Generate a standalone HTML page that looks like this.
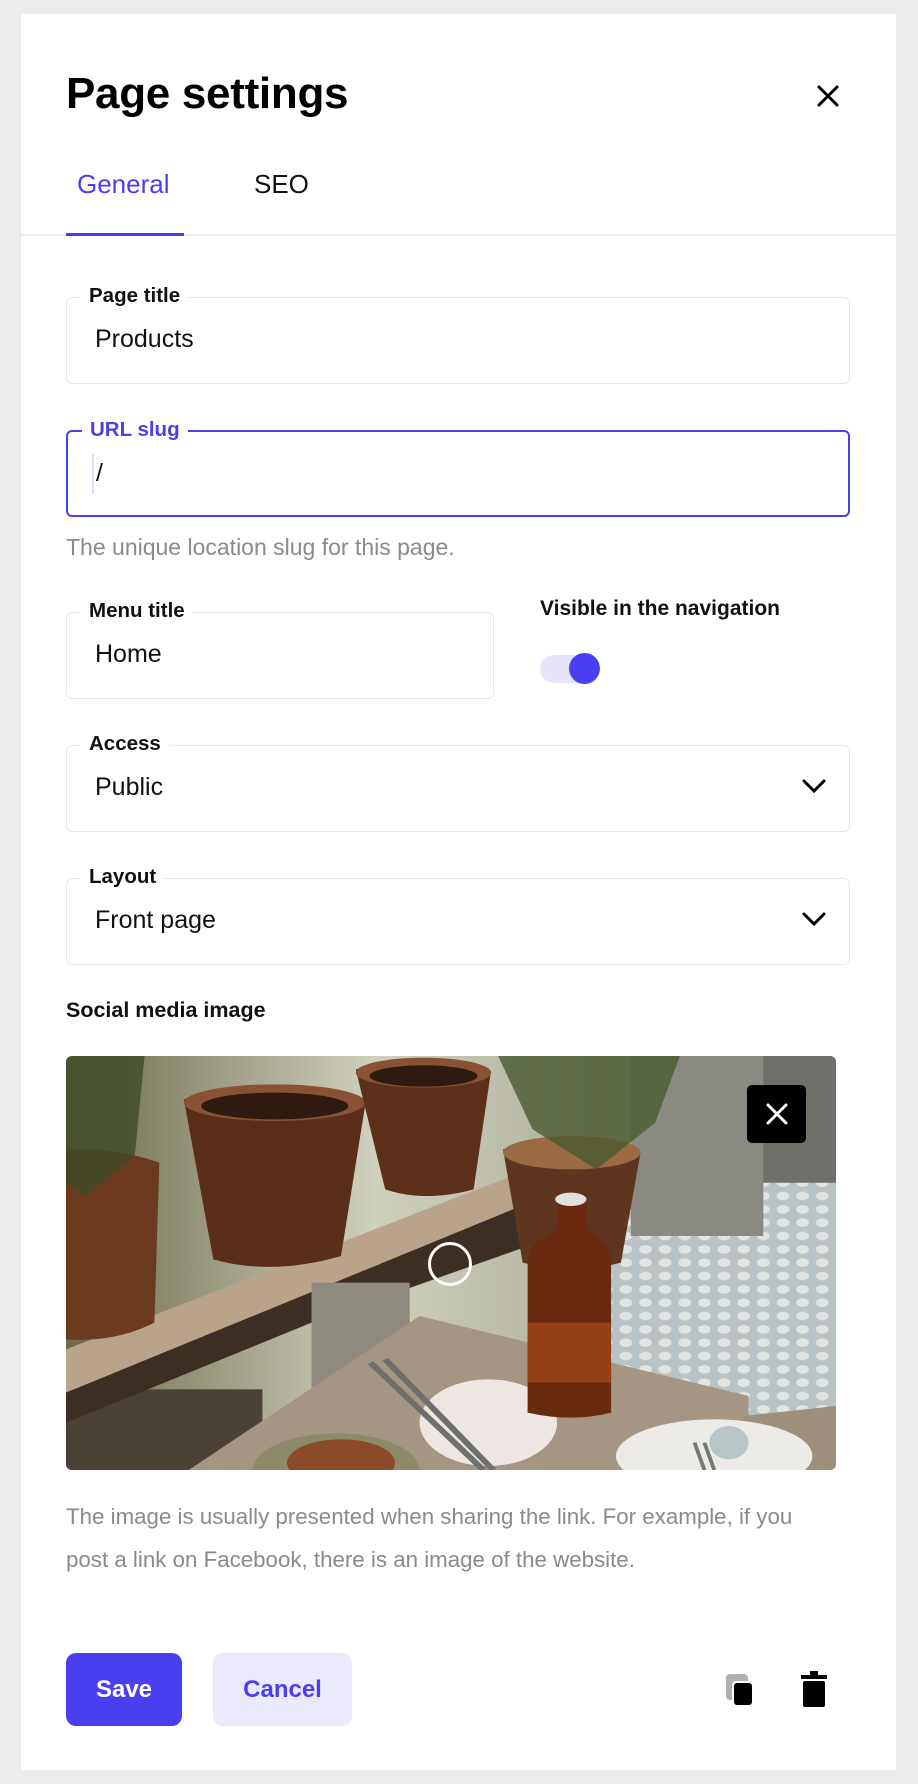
<!DOCTYPE html>
<html><head><meta charset="utf-8">
<style>
*{box-sizing:border-box;margin:0;padding:0}
body{width:918px;height:1784px;background:#ececec;font-family:"Liberation Sans",sans-serif;position:relative;overflow:hidden}
.card{position:absolute;left:21px;top:14px;width:875px;height:1756px;background:#fff}
.abs{position:absolute}
h1{position:absolute;left:66px;top:69px;font-size:44px;font-weight:700;color:#000;letter-spacing:-0.3px}
.tab{position:absolute;top:169px;font-size:26px}
.field{position:absolute;left:66px;width:784px;height:87px;border:1.5px solid #e8e8ea;border-radius:6px}
.lbl{position:absolute;left:14px;top:-14px;background:#fff;padding:0 8px;font-size:20.5px;font-weight:700;color:#111;line-height:24px}
.val{position:absolute;left:28px;top:27px;font-size:25px;color:#111}
.help{position:absolute;left:66px;font-size:22.3px;color:#8a8a8a;white-space:nowrap}
.chev{position:absolute;right:22px;top:32px}
</style></head><body>
<div class="card"></div>
<h1>Page settings</h1>
<svg class="abs" style="left:816px;top:84px" width="24" height="24" viewBox="0 0 24 24"><path d="M3 3L21 21M21 3L3 21" stroke="#000" stroke-width="3" stroke-linecap="round"/></svg>
<div class="tab" style="left:77px;color:#4a3ff0">General</div>
<div class="tab" style="left:254px;color:#111">SEO</div>
<div class="abs" style="left:21px;top:234px;width:875px;height:2px;background:#eeeef0"></div>
<div class="abs" style="left:66px;top:233px;width:118px;height:3px;background:#4a3ff0"></div>

<div class="field" style="top:297px"><div class="lbl">Page title</div><div class="val">Products</div></div>
<div class="field" style="top:430px;border:2px solid #4a3ff0"><div class="lbl" style="color:#4a3ff0">URL slug</div><div class="abs" style="left:24px;top:22px;width:2px;height:40px;background:#dcdcf5"></div><div class="val" style="top:27px">/</div></div>
<div class="help" style="top:534px;font-size:23px">The unique location slug for this page.</div>

<div class="field" style="top:612px;width:428px"><div class="lbl">Menu title</div><div class="val">Home</div></div>
<div class="abs" style="left:540px;top:597px;font-size:21px;font-weight:700;color:#111">Visible in the navigation</div>
<div class="abs" style="left:540px;top:655px;width:58px;height:28px;border-radius:14px;background:#e6e4fb"></div>
<div class="abs" style="left:569px;top:653px;width:31px;height:31px;border-radius:50%;background:#4a3ff0"></div>

<div class="field" style="top:745px"><div class="lbl">Access</div><div class="val">Public</div>
<svg class="chev" width="26" height="16" viewBox="0 0 26 16"><path d="M3 3L13 13L23 3" stroke="#000" stroke-width="3" fill="none" stroke-linecap="round"/></svg></div>
<div class="field" style="top:878px"><div class="lbl">Layout</div><div class="val">Front page</div>
<svg class="chev" width="26" height="16" viewBox="0 0 26 16"><path d="M3 3L13 13L23 3" stroke="#000" stroke-width="3" fill="none" stroke-linecap="round"/></svg></div>

<div class="abs" style="left:66px;top:998px;font-size:21.5px;font-weight:700;color:#111">Social media image</div>

<div class="abs" style="left:66px;top:1056px;width:770px;height:414px;border-radius:6px;overflow:hidden">
<svg width="770" height="414" viewBox="0 0 1568 1242" preserveAspectRatio="none">
<defs>
<pattern id="tile" width="40" height="40" patternUnits="userSpaceOnUse"><rect width="40" height="40" fill="#b9c2c4"/><circle cx="20" cy="20" r="13" fill="#e1e4e0"/></pattern>
<linearGradient id="bg" x1="0" y1="0" x2="1" y2="0"><stop offset="0" stop-color="#6c6a48"/><stop offset=".4" stop-color="#cfd0bd"/><stop offset="1" stop-color="#8d8e7a"/></linearGradient>
</defs>
<rect width="1568" height="1242" fill="url(#bg)"/>
<rect x="1100" y="380" width="468" height="862" fill="url(#tile)"/>
<rect x="1150" y="0" width="270" height="540" fill="#8a8a82"/>
<rect x="1420" y="0" width="148" height="380" fill="#6f706a"/>
<rect x="0" y="1000" width="400" height="242" fill="#4a4236"/>
<polygon points="0,880 960,330 960,430 0,1010" fill="#b9a489"/>
<polygon points="0,1010 960,430 960,560 500,800 0,1100" fill="#3b2e24"/>
<rect x="500" y="680" width="200" height="380" fill="#8e8a80"/>
<path d="M0 280 Q90 270 190 320 L180 800 Q100 860 0 850Z" fill="#6b3a1f"/>
<path d="M240 130 Q420 70 610 140 L560 600 Q420 660 300 610Z" fill="#5a2e18"/>
<ellipse cx="425" cy="140" rx="185" ry="55" fill="#8a5234"/>
<ellipse cx="425" cy="150" rx="150" ry="40" fill="#2e1a10"/>
<path d="M590 40 Q730 0 865 50 L830 400 Q730 440 650 400Z" fill="#5c3019"/>
<ellipse cx="728" cy="50" rx="138" ry="45" fill="#8a5234"/>
<ellipse cx="728" cy="60" rx="110" ry="32" fill="#2e1a10"/>
<path d="M890 280 Q1030 230 1170 290 L1130 620 Q1030 660 930 620Z" fill="#5e3620"/>
<ellipse cx="1030" cy="290" rx="140" ry="50" fill="#9a6a45"/>
<path d="M0 0 L160 0 L140 300 L40 420 L0 380Z" fill="#3f4b26" opacity=".8"/>
<path d="M880 0 L1250 0 L1200 200 L1080 340 L950 220Z" fill="#4a5a30" opacity=".8"/>
<polygon points="250,1242 720,780 1390,1020 1390,1242" fill="#a49682"/>
<polygon points="1380,1080 1568,1050 1568,1242 1380,1242" fill="#9d907c"/>
<ellipse cx="860" cy="1100" rx="140" ry="130" fill="#ede6e2"/>
<ellipse cx="1320" cy="1200" rx="200" ry="110" fill="#ecebe8"/>
<path d="M1000 410 L1060 410 L1060 520 Q1110 560 1110 620 L1110 1070 Q1030 1100 940 1070 L940 620 Q940 560 1000 520Z" fill="#6a2a10"/>
<rect x="940" y="800" width="170" height="180" fill="#a54a15" opacity=".7"/>
<ellipse cx="1028" cy="430" rx="32" ry="20" fill="#e0e0e0"/>
<path d="M620 920 L850 1242 M650 910 L870 1242" stroke="#6e7070" stroke-width="14"/>
<ellipse cx="550" cy="1242" rx="170" ry="110" fill="#8d8a6a"/>
<ellipse cx="560" cy="1220" rx="110" ry="70" fill="#8b4a2a"/>
<path d="M1280 1160 L1300 1242 M1300 1160 L1320 1242" stroke="#777" stroke-width="8"/>
<ellipse cx="1350" cy="1160" rx="40" ry="50" fill="#b8c6c8"/>
</svg>
<div class="abs" style="left:681px;top:29px;width:59px;height:58px;background:#000;border-radius:5px"></div>
<svg class="abs" style="left:699px;top:46px" width="24" height="24" viewBox="0 0 24 24"><path d="M3 3L21 21M21 3L3 21" stroke="#fff" stroke-width="3" stroke-linecap="round"/></svg>
<div class="abs" style="left:362px;top:186px;width:44px;height:44px;border:3px solid #fff;border-radius:50%"></div>
</div>

<div class="help" style="top:1495px;line-height:43px">The image is usually presented when sharing the link. For example, if you<br>post a link on Facebook, there is an image of the website.</div>

<div class="abs" style="left:66px;top:1653px;width:116px;height:73px;background:#4a3ff0;border-radius:10px;color:#fff;font-size:24px;font-weight:700;text-align:center;line-height:73px">Save</div>
<div class="abs" style="left:213px;top:1653px;width:139px;height:73px;background:#ebeafc;border-radius:10px;color:#4a3ff0;font-size:24px;font-weight:700;text-align:center;line-height:73px">Cancel</div>
<svg class="abs" style="left:724px;top:1672px" width="34" height="36" viewBox="0 0 34 36"><rect x="2" y="2" width="22" height="26" rx="4" fill="#b0b0b0"/><rect x="8" y="9" width="22" height="25" rx="4" fill="#fff"/><rect x="10" y="11" width="18" height="22" rx="3" fill="#000"/></svg>
<svg class="abs" style="left:800px;top:1670px" width="28" height="38" viewBox="0 0 28 38"><rect x="10" y="1" width="8" height="5" fill="#000"/><rect x="1" y="5" width="26" height="4" fill="#000"/><rect x="3" y="11" width="22" height="26" rx="2" fill="#000"/></svg>
</body></html>
